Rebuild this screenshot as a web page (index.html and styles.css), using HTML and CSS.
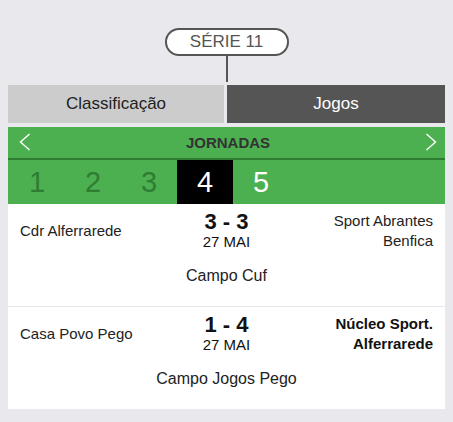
FILE: index.html
```html
<!DOCTYPE html>
<html lang="pt">
<head>
<meta charset="utf-8">
<title>Série 11 - Jogos</title>
<link rel="stylesheet" href="styles.css">
</head>
<body>
<div class="page">
  <div class="series">
    <div class="pill">SÉRIE 11</div>
    <div class="stem"></div>
  </div>
  <div class="tabs">
    <div class="tab">Classificação</div>
    <div class="tab active">Jogos</div>
  </div>
  <div class="rounds">
    <div class="rounds-head">
      <svg class="arrow" width="12" height="18" viewBox="0 0 12 18"><polyline points="10.5,1 1.5,9 10.5,17" fill="none" stroke="#fff" stroke-width="1.4"/></svg>
      <span class="rounds-title">JORNADAS</span>
      <svg class="arrow" width="12" height="18" viewBox="0 0 12 18"><polyline points="1.5,1 10.5,9 1.5,17" fill="none" stroke="#fff" stroke-width="1.4"/></svg>
    </div>
    <div class="rounds-list">
      <span class="round past">1</span>
      <span class="round past">2</span>
      <span class="round past">3</span>
      <span class="round current">4</span>
      <span class="round next">5</span>
    </div>
  </div>
  <div class="match">
    <div class="match-row">
      <div class="team home">Cdr Alferrarede</div>
      <div class="result">
        <div class="score">3 - 3</div>
        <div class="date">27 MAI</div>
      </div>
      <div class="team away">Sport Abrantes Benfica</div>
    </div>
    <div class="venue">Campo Cuf</div>
  </div>
  <div class="match">
    <div class="match-row">
      <div class="team home">Casa Povo Pego</div>
      <div class="result">
        <div class="score">1 - 4</div>
        <div class="date">27 MAI</div>
      </div>
      <div class="team away winner">Núcleo Sport. Alferrarede</div>
    </div>
    <div class="venue">Campo Jogos Pego</div>
  </div>
</div>
</body>
</html>
```
FILE: styles.css
```css
html, body {
  margin: 0;
  padding: 0;
  background: #e9e8ed;
  font-family: "Liberation Sans", Arial, sans-serif;
}

.page {
  padding: 28px 8px 0;
}

.series {
  display: flex;
  flex-direction: column;
  align-items: center;
  margin-bottom: 3px;
}

.pill {
  box-sizing: border-box;
  width: 124px;
  height: 28px;
  border: 2px solid #555;
  border-radius: 14px;
  background: #fff;
  color: #555;
  font-size: 17px;
  display: flex;
  align-items: center;
  justify-content: center;
}

.stem {
  width: 2px;
  height: 26px;
  background: #555;
}

.tabs {
  display: grid;
  grid-template-columns: 216px 1fr;
  gap: 3px;
  height: 38px;
  margin-bottom: 4px;
}

.tab {
  background: #cccccc;
  color: #222;
  font-size: 17px;
  display: flex;
  align-items: center;
  justify-content: center;
}

.tab.active {
  background: #555555;
  color: #fff;
}

.rounds {
  background: #4caf50;
}

.rounds-head {
  height: 31px;
  border-bottom: 2px solid #2e7d32;
  display: flex;
  align-items: center;
  justify-content: space-between;
  padding: 0 8px 0 11px;
}

.arrow {
  display: block;
  margin-top: -2px;
}

.rounds-title {
  font-size: 15px;
  font-weight: bold;
  color: #333;
}

.rounds-list {
  display: flex;
  height: 44px;
  padding-left: 1px;
}

.round {
  width: 56px;
  display: flex;
  align-items: center;
  justify-content: center;
  font-size: 29px;
}

.round.past {
  color: #2e7d32;
}

.round.current {
  background: #000;
  color: #fff;
}

.round.next {
  color: #fff;
}

.match {
  background: #fff;
  padding: 7px 12px 20px;
}

.match + .match {
  border-top: 1px solid #e6e6ee;
}

.match-row {
  display: grid;
  grid-template-columns: 1fr 1fr 1fr;
  align-items: center;
  min-height: 40px;
}

.team {
  font-size: 15px;
  line-height: 20px;
  color: #222;
}

.team.away {
  text-align: right;
}

.team.winner {
  font-weight: bold;
  color: #111;
}

.result {
  text-align: center;
  color: #111;
}

.score {
  font-size: 22px;
  line-height: 22px;
  font-weight: bold;
}

.date {
  font-size: 15px;
  line-height: 18px;
}

.venue {
  margin-top: 15px;
  text-align: center;
  font-size: 16px;
  line-height: 20px;
  color: #222;
}
```
